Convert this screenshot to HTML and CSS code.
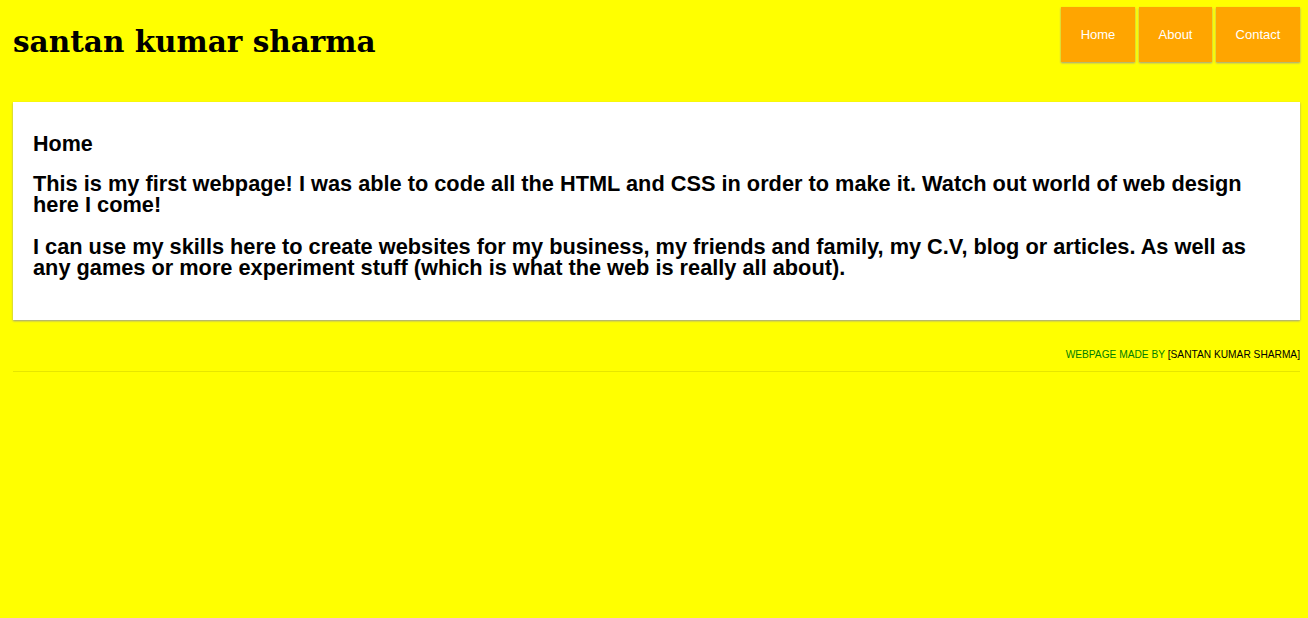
FILE: index.html
```html
<!DOCTYPE html>
<html>
<head>
<meta charset="utf-8">
<title>santan kumar sharma</title>
<link rel="stylesheet" href="styles.css">
</head>
<body>
<div class="page">
  <header class="header">
    <h1 class="title">santan kumar sharma</h1>
    <nav class="nav">
      <a class="nav-btn nav-home" href="#">Home</a>
      <a class="nav-btn nav-about" href="#">About</a>
      <a class="nav-btn nav-contact" href="#">Contact</a>
    </nav>
  </header>
  <main class="card">
    <h2 class="card-title">Home</h2>
    <p class="card-text">This is my first webpage! I was able to code all the HTML and CSS in order to make it. Watch out world of web design here I come!</p>
    <p class="card-text">I can use my skills here to create websites for my business, my friends and family, my C.V, blog or articles. As well as any games or more experiment stuff (which is what the web is really all about).</p>
  </main>
  <footer class="footer">
    <span class="footer-label">WEBPAGE MADE BY</span> <span class="footer-name">[SANTAN KUMAR SHARMA]</span>
  </footer>
</div>
</body>
</html>
```
FILE: styles.css
```css
html, body {
  margin: 0;
  padding: 0;
  background: #ffff00;
}
body {
  font-family: "Liberation Sans", Arial, sans-serif;
}
.page {
  padding: 0 8px 0 13px;
}
.header {
  display: flex;
  justify-content: space-between;
  align-items: flex-start;
  padding-top: 7px;
  height: 102px;
  box-sizing: border-box;
}
.title {
  margin: 15px 0 0 0;
  font-family: "DejaVu Serif", Georgia, serif;
  font-weight: bold;
  font-size: 29.5px;
  line-height: 40px;
  color: #000;
}
.nav {
  display: flex;
  gap: 4px;
}
.nav-btn {
  display: flex;
  align-items: center;
  justify-content: center;
  height: 55px;
  background: #ffa500;
  color: #fff;
  text-decoration: none;
  font-size: 13px;
  box-shadow: 0 1px 2px #999;
}
.nav-home { width: 74px; }
.nav-about { width: 73px; }
.nav-contact { width: 84px; }
.card {
  background: #fff;
  padding: 30px 20px 25px 20px;
  box-shadow: 0 1px 2px #999;
  height: 218px;
  box-sizing: border-box;
}
.card-title {
  margin: 0 0 17px 0;
  font-size: 21.5px;
  line-height: 24px;
  font-weight: bold;
}
.card-text {
  margin: 0 0 21px 0;
  font-size: 21.75px;
  line-height: 21px;
  font-weight: bold;
}
.footer {
  margin-top: 28px;
  text-align: right;
  font-size: 10.2px;
  line-height: 13px;
  padding-bottom: 10px;
  border-bottom: 1px solid #e6e600;
}
.footer-label { color: #008000; }
.footer-name { color: #000; }
```
